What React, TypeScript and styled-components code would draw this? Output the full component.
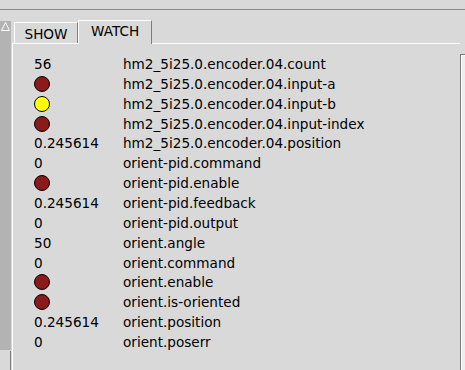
import styled, { createGlobalStyle } from "styled-components";

const Global = createGlobalStyle`
  html, body {
    margin: 0;
    padding: 0;
    background: #d9d9d9;
  }
  body {
    font-family: "DejaVu Sans", "Liberation Sans", sans-serif;
    color: #000;
  }
`;

const Page = styled.div`
  width: 465px;
  height: 370px;
  display: flex;
  flex-direction: column;
  overflow: hidden;
  background: #d9d9d9;
`;

const TopBar = styled.div`
  height: 9px;
  border-bottom: 1px solid #8a8a8a;
  flex: none;
`;

const Body = styled.div`
  flex: 1;
  display: flex;
  min-height: 0;
`;

const LeftGutter = styled.div`
  width: 12px;
  flex: none;
  display: flex;
  flex-direction: column;
`;

const LeftScroll = styled.div`
  margin-top: 11px;
  height: 328px;
  background: #b3b3b3;
  display: flex;
  justify-content: center;
  align-items: flex-start;
  padding-top: 1px;
  width: 11px;
`;

const LeftFoot = styled.div`
  flex: 1;
  width: 10px;
  border-right: 1px solid #7a7a7a;
  margin-top: 1px;
`;

const Notebook = styled.div`
  flex: 1;
  display: flex;
  flex-direction: column;
  min-width: 0;
`;

const TabRow = styled.div`
  height: 33px;
  display: flex;
  align-items: flex-end;
  padding-left: 2px;
  flex: none;
`;

const Tab = styled.div<{ $active?: boolean }>`
  box-sizing: border-box;
  height: ${(p) => (p.$active ? 24 : 21)}px;
  padding: 0 ${(p) => (p.$active ? 12 : 9.5)}px;
  padding-top: ${(p) => (p.$active ? 2 : 3)}px;
  margin-bottom: ${(p) => (p.$active ? -1 : 0)}px;
  border-left: 1px solid #ffffff;
  border-top: 1px solid #ffffff;
  border-right: 1px solid #7d7d7d;
  background: #d9d9d9;
  font-size: 13.6px;
  line-height: 16px;
  position: relative;
  z-index: 1;
`;

const Panel = styled.div`
  flex: 1;
  border-top: 1px solid #ffffff;
  border-left: 1px solid #ffffff;
  padding-top: 10px;
`;

const Row = styled.div`
  height: 19.86px;
  display: grid;
  grid-template-columns: 89px 1fr;
  align-items: center;
  padding-left: 21px;
  font-size: 13.6px;
  white-space: nowrap;
`;

const Led = styled.span<{ $on: boolean }>`
  display: block;
  width: 14px;
  height: 14px;
  border-radius: 50%;
  border: 1px solid #000;
  background: ${(p) => (p.$on ? "#ffff00" : "#8b1a1a")};
`;

const RightScroll = styled.div`
  width: 4px;
  flex: none;
  margin-top: 44px;
  border-left: 1px solid #7a7a7a;
  border-top: 1px solid #7a7a7a;
  background: #eeeeee;
  box-shadow: inset 1px 1px 0 #ffffff;
`;

type Pin = { name: string; value?: string; led?: boolean };

const pins: Pin[] = [
  { name: "hm2_5i25.0.encoder.04.count", value: "56" },
  { name: "hm2_5i25.0.encoder.04.input-a", led: false },
  { name: "hm2_5i25.0.encoder.04.input-b", led: true },
  { name: "hm2_5i25.0.encoder.04.input-index", led: false },
  { name: "hm2_5i25.0.encoder.04.position", value: "0.245614" },
  { name: "orient-pid.command", value: "0" },
  { name: "orient-pid.enable", led: false },
  { name: "orient-pid.feedback", value: "0.245614" },
  { name: "orient-pid.output", value: "0" },
  { name: "orient.angle", value: "50" },
  { name: "orient.command", value: "0" },
  { name: "orient.enable", led: false },
  { name: "orient.is-oriented", led: false },
  { name: "orient.position", value: "0.245614" },
  { name: "orient.poserr", value: "0" },
];

export default function App() {
  return (
    <Page>
      <Global />
      <TopBar />
      <Body>
        <LeftGutter>
          <LeftScroll>
            <svg width="9" height="9" viewBox="0 0 9 9">
              <polygon points="4.5,0.5 8.5,8.5 0.5,8.5" fill="#b3b3b3" stroke="#ffffff" />
            </svg>
          </LeftScroll>
          <LeftFoot />
        </LeftGutter>
        <Notebook>
          <TabRow>
            <Tab>SHOW</Tab>
            <Tab $active>WATCH</Tab>
          </TabRow>
          <Panel>
            {pins.map((p) => (
              <Row key={p.name}>
                {p.led === undefined ? <span>{p.value}</span> : <Led $on={p.led} />}
                <span>{p.name}</span>
              </Row>
            ))}
          </Panel>
        </Notebook>
        <RightScroll />
      </Body>
    </Page>
  );
}
